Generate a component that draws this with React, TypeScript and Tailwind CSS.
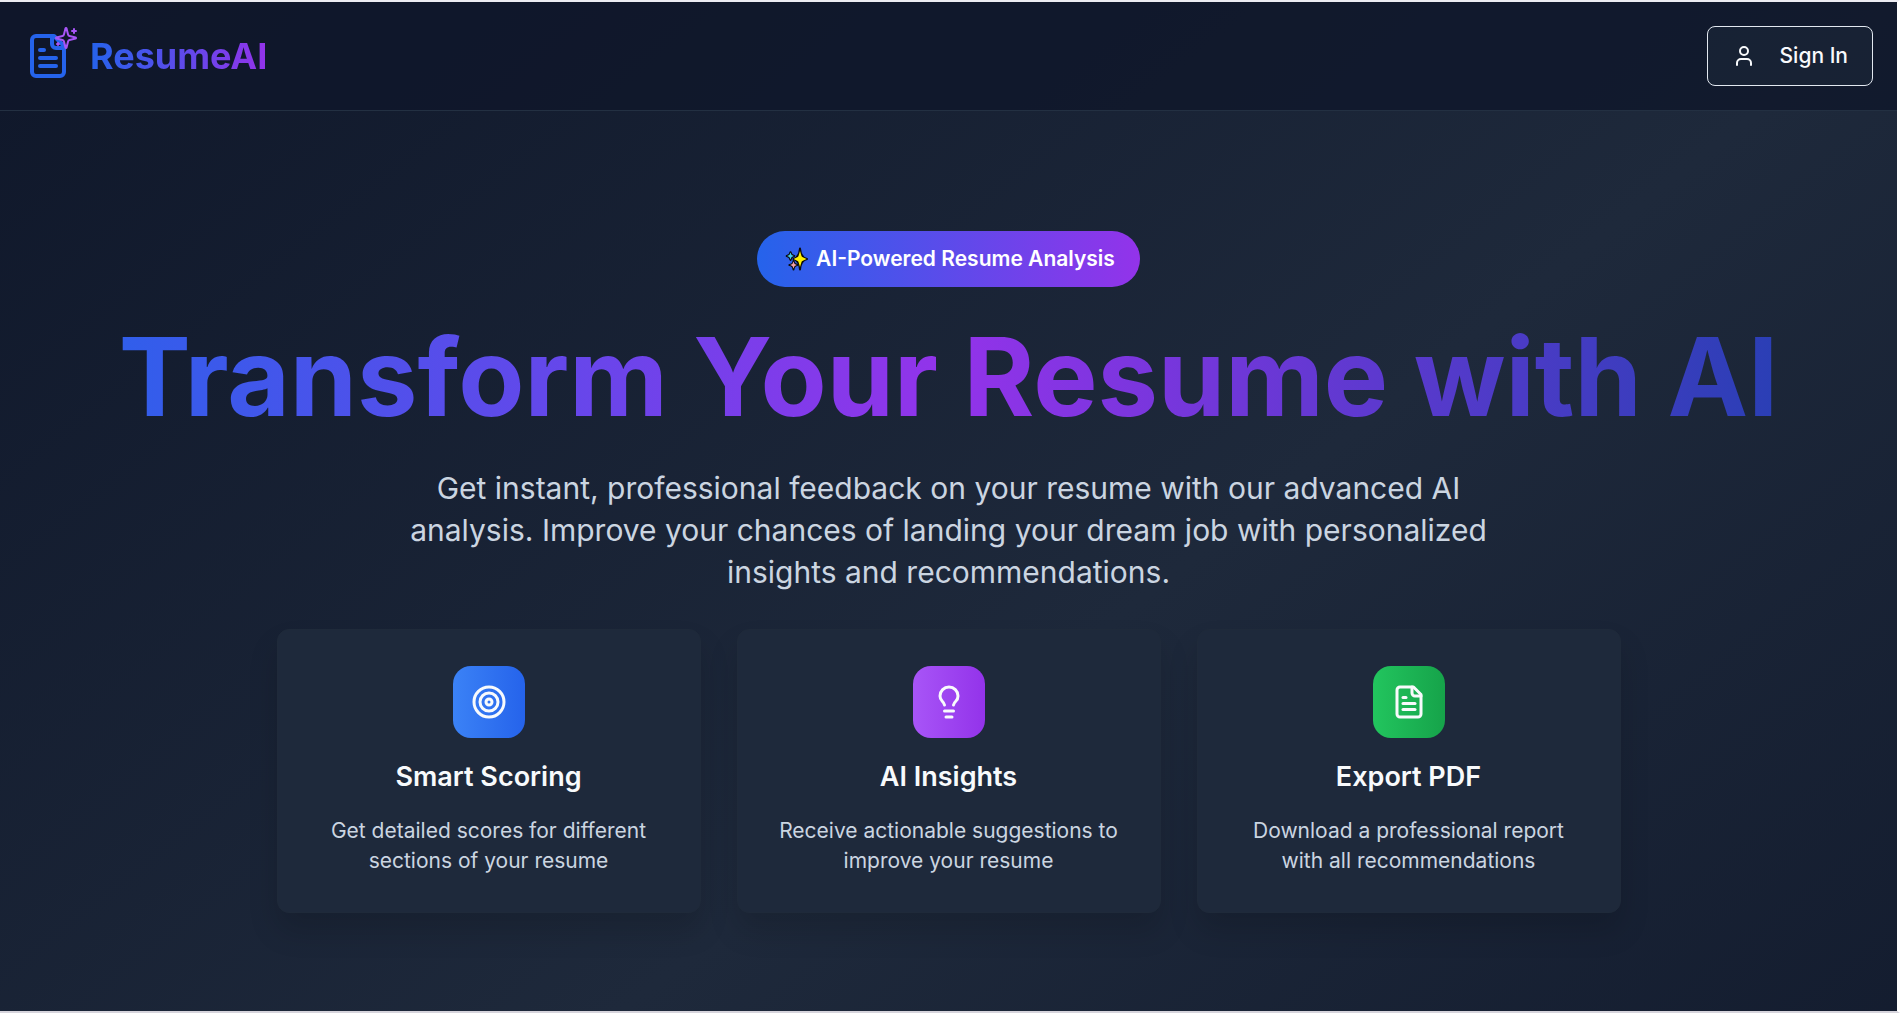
import React from "react";

type IconProps = { className?: string };

function FileTextIcon({ className }: IconProps) {
  return (
    <svg className={className} viewBox="0 0 24 24" fill="none" stroke="currentColor" strokeWidth={2} strokeLinecap="round" strokeLinejoin="round" aria-hidden="true">
      <path d="M15 2H6a2 2 0 0 0-2 2v16a2 2 0 0 0 2 2h12a2 2 0 0 0 2-2V7Z" />
      <path d="M14 2v4a2 2 0 0 0 2 2h4" />
      <path d="M10 9H8" />
      <path d="M16 13H8" />
      <path d="M16 17H8" />
    </svg>
  );
}

function SparklesIcon({ className }: IconProps) {
  return (
    <svg className={className} viewBox="0 0 24 24" fill="none" stroke="currentColor" strokeWidth={2} strokeLinecap="round" strokeLinejoin="round" aria-hidden="true">
      <path d="M9.937 15.5A2 2 0 0 0 8.5 14.063l-6.135-1.582a.5.5 0 0 1 0-.962L8.5 9.936A2 2 0 0 0 9.937 8.5l1.582-6.135a.5.5 0 0 1 .963 0L14.063 8.5A2 2 0 0 0 15.5 9.937l6.135 1.581a.5.5 0 0 1 0 .964L15.5 14.063a2 2 0 0 0-1.437 1.437l-1.582 6.135a.5.5 0 0 1-.963 0z" />
      <path d="M20 3v4" />
      <path d="M22 5h-4" />
      <path d="M4 17v2" />
      <path d="M5 18H3" />
    </svg>
  );
}

function UserIcon({ className }: IconProps) {
  return (
    <svg className={className} viewBox="0 0 24 24" fill="none" stroke="currentColor" strokeWidth={2} strokeLinecap="round" strokeLinejoin="round" aria-hidden="true">
      <path d="M19 21v-2a4 4 0 0 0-4-4H9a4 4 0 0 0-4 4v2" />
      <circle cx="12" cy="7" r="4" />
    </svg>
  );
}

function TargetIcon({ className }: IconProps) {
  return (
    <svg className={className} viewBox="0 0 24 24" fill="none" stroke="currentColor" strokeWidth={2} aria-hidden="true">
      <circle cx="12" cy="12" r="10" />
      <circle cx="12" cy="12" r="6" />
      <circle cx="12" cy="12" r="2" />
    </svg>
  );
}

function BulbIcon({ className }: IconProps) {
  return (
    <svg className={className} viewBox="0 0 24 24" fill="none" stroke="currentColor" strokeWidth={2} strokeLinecap="round" strokeLinejoin="round" aria-hidden="true">
      <path d="M15 14c.2-1 .7-1.7 1.5-2.5 1-.9 1.5-2.2 1.5-3.5A6 6 0 0 0 6 8c0 1 .2 2.2 1.5 3.5.7.7 1.3 1.5 1.5 2.5" />
      <path d="M9 18h6" />
      <path d="M10 22h4" />
    </svg>
  );
}

function SparkleEmoji({ className }: IconProps) {
  return (
    <svg className={className} viewBox="0 0 24 24" stroke="#0c0c0c" strokeWidth={2} strokeLinejoin="round" role="img" aria-label="Sparkles">
      <path fill="#44cdf0" d="M6.5 5.2Q6.9 8.6 10.3 9Q6.9 9.4 6.5 13Q6.1 9.4 2.7 9Q6.1 8.6 6.5 5.2Z" />
      <path fill="#44cdf0" stroke="none" d="M6.5 5.6 7.6 7.9 9.9 9 7.6 10.1 6.5 12.4 5.4 10.1 3.1 9 5.4 7.9Z" />
      <path fill="#f4a0ac" d="M9.5 14Q9.9 17.6 13.5 18Q9.9 18.4 9.5 22.4Q9.1 18.4 5.4 18Q9.1 17.6 9.5 14Z" />
      <path fill="#f4a0ac" stroke="none" d="M9.5 14.6 10.6 16.9 12.9 18 10.6 19.1 9.5 21.4 8.4 19.1 6.1 18 8.4 16.9Z" />
      <path fill="#fff100" d="M16 1.5Q16.6 10.6 23 12Q16.6 13.4 16 22.5Q15.2 13.4 9.4 12Q15.2 10.6 16 1.5Z" />
      <path fill="#fff100" stroke="none" d="M16 4 17.7 9.7 22.6 12 17.7 14.3 16 20 14.3 14.3 9.6 12 14.3 9.7Z" />
    </svg>
  );
}

const features = [
  {
    title: "Smart Scoring",
    text: "Get detailed scores for different sections of your resume",
    tile: "from-[#3b82f6] to-[#2563eb]",
    Icon: TargetIcon,
  },
  {
    title: "AI Insights",
    text: "Receive actionable suggestions to improve your resume",
    tile: "from-[#a855f7] to-[#9333ea]",
    Icon: BulbIcon,
  },
  {
    title: "Export PDF",
    text: "Download a professional report with all recommendations",
    tile: "from-[#22c55e] to-[#16a34a]",
    Icon: FileTextIcon,
  },
];

export default function App() {
  return (
    <div className="flex min-h-screen flex-col border-t-2 border-r-3 border-b-2 border-t-[#ececf2] border-r-white border-b-[#d6d4dc] bg-[#0f172a] bg-[linear-gradient(to_bottom_right,#0f172a,#1e293b,#0f172a)] bg-[length:100%_1500px] bg-no-repeat font-[Inter,sans-serif] text-[#f8fafc]">
      <header className="flex items-center justify-between border-b border-[#233042] bg-[#0f172a]/80 px-6 py-6">
        <a href="#" className="flex items-center gap-[18px]">
          <span className="relative">
            <FileTextIcon className="size-12 text-[#2563eb]" />
            <SparklesIcon className="absolute -top-1.5 -right-1.5 size-6 text-[#a855f7]" />
          </span>
          <span className="bg-linear-to-r/srgb from-[#2563eb] to-[#9333ea] bg-clip-text text-4xl font-bold text-transparent">ResumeAI</span>
        </a>
        <button type="button" className="flex h-15 items-center gap-6 rounded-lg border border-[#e2e8f0] bg-[#1e293b]/50 px-6 text-[21px] font-medium">
          <UserIcon className="size-6" />
          Sign In
        </button>
      </header>

      <main className="flex flex-col items-center px-6 pt-[120px] text-center">
        <div className="flex h-14 items-center gap-2 rounded-full bg-linear-to-r/srgb from-[#2563eb] to-[#9333ea] pr-[25px] pl-[27px] text-[21px] font-semibold text-white">
          <SparkleEmoji className="size-6" />
          AI-Powered Resume Analysis
        </div>
        <h1 className="mt-9 w-full bg-linear-to-r/srgb from-[#2563eb] via-[#9333ea] to-[#1e40af] bg-clip-text text-[108px] leading-[108px] font-bold text-transparent">
          Transform Your Resume with AI
        </h1>
        <p className="mt-9 max-w-[1152px] text-3xl leading-[42px] text-[#cbd5e1]">
          Get instant, professional feedback on your resume with our advanced AI analysis. Improve your chances of landing your dream job with personalized insights and recommendations.
        </p>
        <div className="mt-9 grid w-full max-w-[1344px] grid-cols-3 gap-9">
          {features.map(({ title, text, tile, Icon }) => (
            <section key={title} className="flex flex-col items-center rounded-xl border border-[#1f2a3a] bg-[#1e293b] p-9 shadow-[0_18px_30px_rgba(0,0,0,0.14)]">
              <div className={`flex size-18 items-center justify-center rounded-[18px] bg-linear-to-r/srgb ${tile}`}>
                <Icon className="size-9" />
              </div>
              <h2 className="mt-5.5 text-[27px] leading-[34px] font-semibold">{title}</h2>
              <p className="mt-5.5 text-[21px] leading-[30px] text-[#cbd5e1]">{text}</p>
            </section>
          ))}
        </div>
      </main>
    </div>
  );
}
